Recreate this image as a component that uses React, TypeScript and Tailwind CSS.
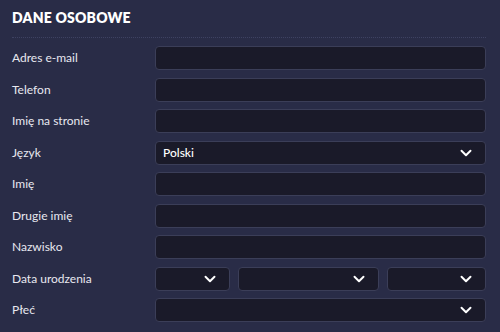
import React from "react";
import { ChevronDown } from "lucide-react";

const Field: React.FC<{ label: string; children: React.ReactNode }> = ({ label, children }) => (
  <div className="flex items-center h-6">
    <div className="w-[143px] shrink-0 text-[12px] text-[#e8e8f0]">{label}</div>
    <div className="flex-1 flex gap-2 h-full">{children}</div>
  </div>
);

const Box: React.FC<{ value?: string; select?: boolean; className?: string }> = ({
  value,
  select,
  className = "flex-1",
}) => (
  <div
    className={`${className} h-full rounded-[4px] bg-[#1a1a29] border border-[#3b3e58] flex items-center justify-between pl-[7px] pr-[10px]`}
  >
    <span className="text-[12px] font-medium text-white">{value}</span>
    {select && <ChevronDown size={18} strokeWidth={2.6} className="text-white" />}
  </div>
);

const App: React.FC = () => {
  return (
    <div className="w-[500px] h-[332px] bg-[#292c47] px-3 pr-[14px] font-['Lato',sans-serif] overflow-hidden">
      <h2 className="pt-2 pb-[9px] text-[14px] leading-5 font-extrabold text-white tracking-[0.2px] border-b border-dotted border-[#3e4262]">
        DANE OSOBOWE
      </h2>
      <div className="flex flex-col gap-[7.5px] pt-2">
        <Field label="Adres e-mail">
          <Box />
        </Field>
        <Field label="Telefon">
          <Box />
        </Field>
        <Field label="Imię na stronie">
          <Box />
        </Field>
        <Field label="Język">
          <Box value="Polski" select />
        </Field>
        <Field label="Imię">
          <Box />
        </Field>
        <Field label="Drugie imię">
          <Box />
        </Field>
        <Field label="Nazwisko">
          <Box />
        </Field>
        <Field label="Data urodzenia">
          <Box select className="w-[75px]" />
          <Box select className="w-[141px]" />
          <Box select className="flex-1" />
        </Field>
        <Field label="Płeć">
          <Box select />
        </Field>
      </div>
    </div>
  );
};

export default App;
